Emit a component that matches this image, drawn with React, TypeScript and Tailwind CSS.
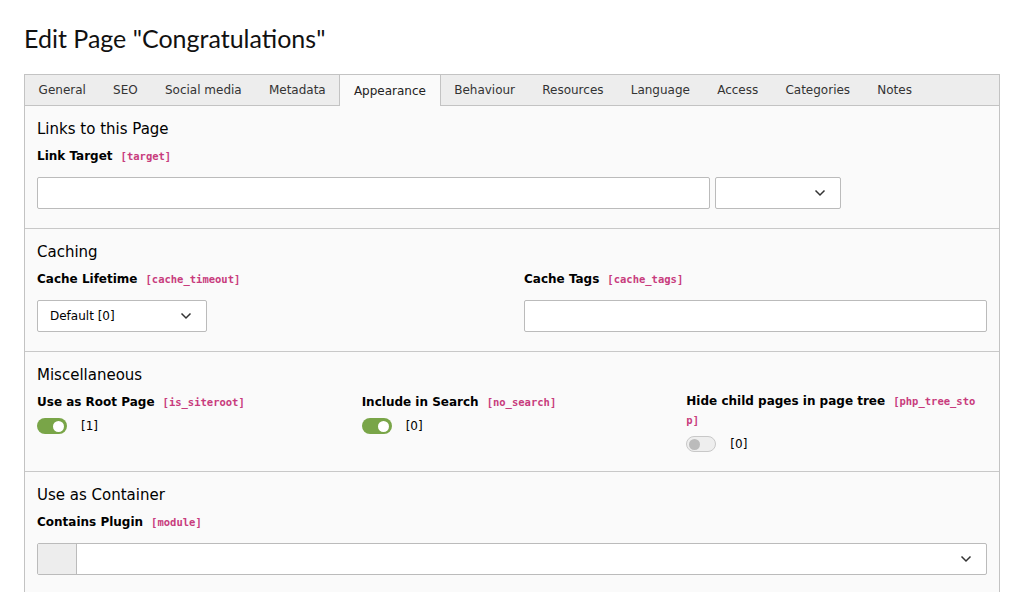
import React from 'react';

const tabs = ['General', 'SEO', 'Social media', 'Metadata', 'Appearance', 'Behaviour', 'Resources', 'Language', 'Access', 'Categories', 'Notes'];

const Chevron = () => (
  <svg width="12" height="8" viewBox="0 0 12 8" fill="none" className="shrink-0">
    <path d="M1.5 1.5 L6 6 L10.5 1.5" stroke="#333" strokeWidth="1.5" />
  </svg>
);

const mono = "font-['DejaVu_Sans_Mono',monospace] text-[10.5px] font-bold text-[#c83c7d]";

const Field = ({ field }: { field: string }) => (
  <code className={`ml-[8px] ${mono}`}>[{field}]</code>
);

const Label = ({ text, field }: { text: string; field: string }) => (
  <div className="text-[12px] leading-[20px] font-bold text-black">
    {text}
    <Field field={field} />
  </div>
);

const Toggle = ({ on, value }: { on: boolean; value: string }) => (
  <div className="mt-[4px] flex h-[20px] items-center gap-[14px]">
    {on ? (
      <span className="flex h-[16px] w-[30px] items-center justify-end rounded-full bg-[#79a548] pr-[3px]">
        <span className="h-[11px] w-[11px] rounded-full bg-white" />
      </span>
    ) : (
      <span className="flex h-[16px] w-[30px] items-center rounded-full border border-[#c8c8c8] bg-[#eeeeee] pl-[2px]">
        <span className="h-[11px] w-[11px] rounded-full bg-[#bbbbbb]" />
      </span>
    )}
    <span className="text-[12px] text-black">{value}</span>
  </div>
);

const SectionTitle = ({ children }: { children: React.ReactNode }) => (
  <h3 className="mb-[6px] h-[22px] text-[15px] leading-[22px] text-black">{children}</h3>
);

export default function App() {
  return (
    <div className="min-h-screen bg-white px-6 font-['DejaVu_Sans',Verdana,sans-serif] text-black">
      <h1 className="pt-[22px] pb-[20px] font-['Lato',sans-serif] text-[25px] leading-[32px] text-[#111]">
        Edit Page "Congratulations"
      </h1>

      <div className="flex h-[32px] border border-[#c3c3c3] bg-[#ededed] text-[12px]">
        {tabs.map(t => (
          <div
            key={t}
            className={`flex items-center px-[13.6px] ${
              t === 'Appearance'
                ? '-mb-px -mt-px border-x border-t border-[#c3c3c3] bg-[#fafafa] text-[#222]'
                : 'text-[#333]'
            }`}
          >
            {t}
          </div>
        ))}
      </div>

      <div className="border-x border-b border-[#c3c3c3] bg-[#fafafa]">
        {/* Links */}
        <section className="border-b border-[#c8c8c8] px-[12px] pt-[12px] pb-[19px]">
          <SectionTitle>Links to this Page</SectionTitle>
          <Label text="Link Target" field="target" />
          <div className="mt-[11px] flex gap-[5px]">
            <div className="h-[32px] w-[673px] rounded-[2px] border border-[#bbbbbb] bg-white" />
            <div className="flex h-[32px] w-[126px] items-center justify-end rounded-[2px] border border-[#bbbbbb] bg-white pr-[14px]">
              <Chevron />
            </div>
          </div>
        </section>

        {/* Caching */}
        <section className="border-b border-[#c8c8c8] px-[12px] pt-[12px] pb-[19px]">
          <SectionTitle>Caching</SectionTitle>
          <div className="grid grid-cols-2 gap-6">
            <div>
              <Label text="Cache Lifetime" field="cache_timeout" />
              <div className="mt-[11px] flex h-[32px] w-[170px] items-center justify-between rounded-[2px] border border-[#bbbbbb] bg-white pl-[12px] pr-[14px] text-[12px]">
                Default [0]
                <Chevron />
              </div>
            </div>
            <div>
              <Label text="Cache Tags" field="cache_tags" />
              <div className="mt-[11px] h-[32px] rounded-[2px] border border-[#bbbbbb] bg-white" />
            </div>
          </div>
        </section>

        {/* Misc */}
        <section className="border-b border-[#c8c8c8] px-[12px] pt-[12px] pb-[17px]">
          <SectionTitle>Miscellaneous</SectionTitle>
          <div className="grid grid-cols-3 gap-6">
            <div>
              <Label text="Use as Root Page" field="is_siteroot" />
              <Toggle on value="[1]" />
            </div>
            <div>
              <Label text="Include in Search" field="no_search" />
              <Toggle on value="[0]" />
            </div>
            <div>
              <div className="text-[12px] leading-[19px] font-bold">
                <div>
                  Hide child pages in page tree
                  <code className={`ml-[8px] ${mono}`}>[php_tree_sto</code>
                </div>
                <div>
                  <code className={mono}>p]</code>
                </div>
              </div>
              <Toggle on={false} value="[0]" />
            </div>
          </div>
        </section>

        {/* Container */}
        <section className="px-[12px] pt-[12px] pb-[20px]">
          <SectionTitle>Use as Container</SectionTitle>
          <Label text="Contains Plugin" field="module" />
          <div className="mt-[11px] flex h-[32px] overflow-hidden rounded-[2px] border border-[#bbbbbb] bg-white">
            <div className="w-[39px] border-r border-[#bbbbbb] bg-[#ededed]" />
            <div className="flex flex-1 items-center justify-end pr-[14px]">
              <Chevron />
            </div>
          </div>
        </section>
      </div>
    </div>
  );
}
